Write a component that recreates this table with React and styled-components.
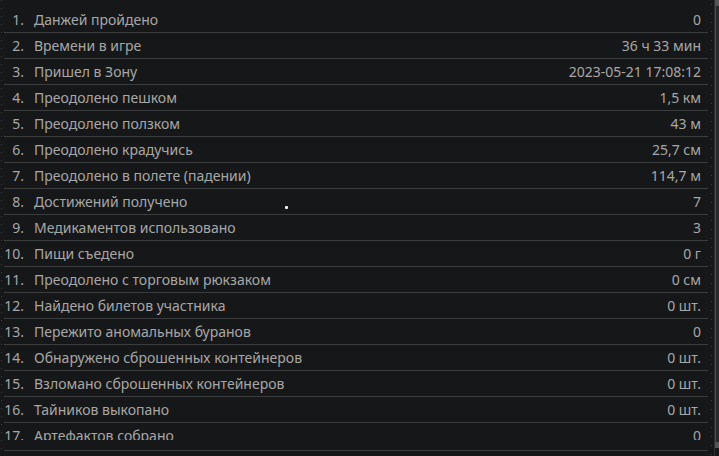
import React from "react";
import styled, { createGlobalStyle } from "styled-components";

const GlobalStyle = createGlobalStyle`
  html, body {
    margin: 0;
    padding: 0;
    background-color: #161719;
    overflow: hidden;
  }
  #root {
    width: 719px;
    height: 456px;
  }
`;

const Frame = styled.div`
  position: relative;
  display: flex;
  width: 719px;
  height: 456px;
  background-color: #161719;
  font-family: "Noto Sans", "Liberation Sans", sans-serif;
  font-size: 14px;
  color: #a7a7a7;
`;

const LeftRail = styled.div`
  width: 1px;
  margin: 0 2px 0 1px;
  background: repeating-linear-gradient(to bottom, #3e3f42 0 1px, transparent 1px 8px);
`;

const Panel = styled.div`
  width: 705px;
  height: 451px;
  border-bottom: 1px solid #3b3c3e;
  box-sizing: border-box;
`;

const Viewport = styled.div`
  height: 440px;
  overflow: hidden;
`;

const StatList = styled.div`
  display: flex;
  flex-direction: column;
  padding-top: 7px;
`;

const Row = styled.div`
  display: flex;
  align-items: center;
  height: 26px;
  box-sizing: border-box;
  border-bottom: 1px solid #3b3c3e;
  padding-right: 7px;
  white-space: nowrap;
`;

const Num = styled.span`
  width: 20px;
  padding-right: 10px;
  text-align: right;
`;

const Label = styled.span`
  flex: 1;
`;

const Value = styled.span`
  text-align: right;
`;

const RightRail = styled.div`
  display: flex;
  width: 11px;
  height: 456px;
`;

const Ticks = styled.div`
  width: 1px;
  margin: 0 2px 0 3px;
  background: repeating-linear-gradient(to bottom, transparent 0 4px, #3e3f42 4px 5px, transparent 5px 9px);
`;

const TrackLine = styled.div`
  width: 1px;
  background-color: #2f3032;
`;

const Thumb = styled.div`
  width: 4px;
  height: 448px;
  background-color: #2a2b2d;
  border-left: 1px solid #4a4b4d;
  box-sizing: border-box;
  border-top: 6px solid #55565a;
  border-bottom: 6px solid #55565a;
`;

const CursorDot = styled.div`
  position: absolute;
  left: 285px;
  top: 206px;
  width: 3px;
  height: 3px;
  background-color: #f2f2f2;
  border-radius: 1px;
`;

const stats = [
  ["Данжей пройдено", "0"],
  ["Времени в игре", "36 ч 33 мин"],
  ["Пришел в Зону", "2023-05-21 17:08:12"],
  ["Преодолено пешком", "1,5 км"],
  ["Преодолено ползком", "43 м"],
  ["Преодолено крадучись", "25,7 см"],
  ["Преодолено в полете (падении)", "114,7 м"],
  ["Достижений получено", "7"],
  ["Медикаментов использовано", "3"],
  ["Пищи съедено", "0 г"],
  ["Преодолено с торговым рюкзаком", "0 см"],
  ["Найдено билетов участника", "0 шт."],
  ["Пережито аномальных буранов", "0"],
  ["Обнаружено сброшенных контейнеров", "0 шт."],
  ["Взломано сброшенных контейнеров", "0 шт."],
  ["Тайников выкопано", "0 шт."],
  ["Артефактов собрано", "0"],
];

function App() {
  return (
    <>
      <GlobalStyle />
      <Frame>
        <LeftRail />
        <Panel>
          <Viewport>
            <StatList>
              {stats.map(([label, value], i) => (
                <Row key={label}>
                  <Num>{i + 1}.</Num>
                  <Label>{label}</Label>
                  <Value>{value}</Value>
                </Row>
              ))}
            </StatList>
          </Viewport>
        </Panel>
        <RightRail>
          <Ticks />
          <TrackLine />
          <Thumb />
        </RightRail>
        <CursorDot />
      </Frame>
    </>
  );
}

export default App;
